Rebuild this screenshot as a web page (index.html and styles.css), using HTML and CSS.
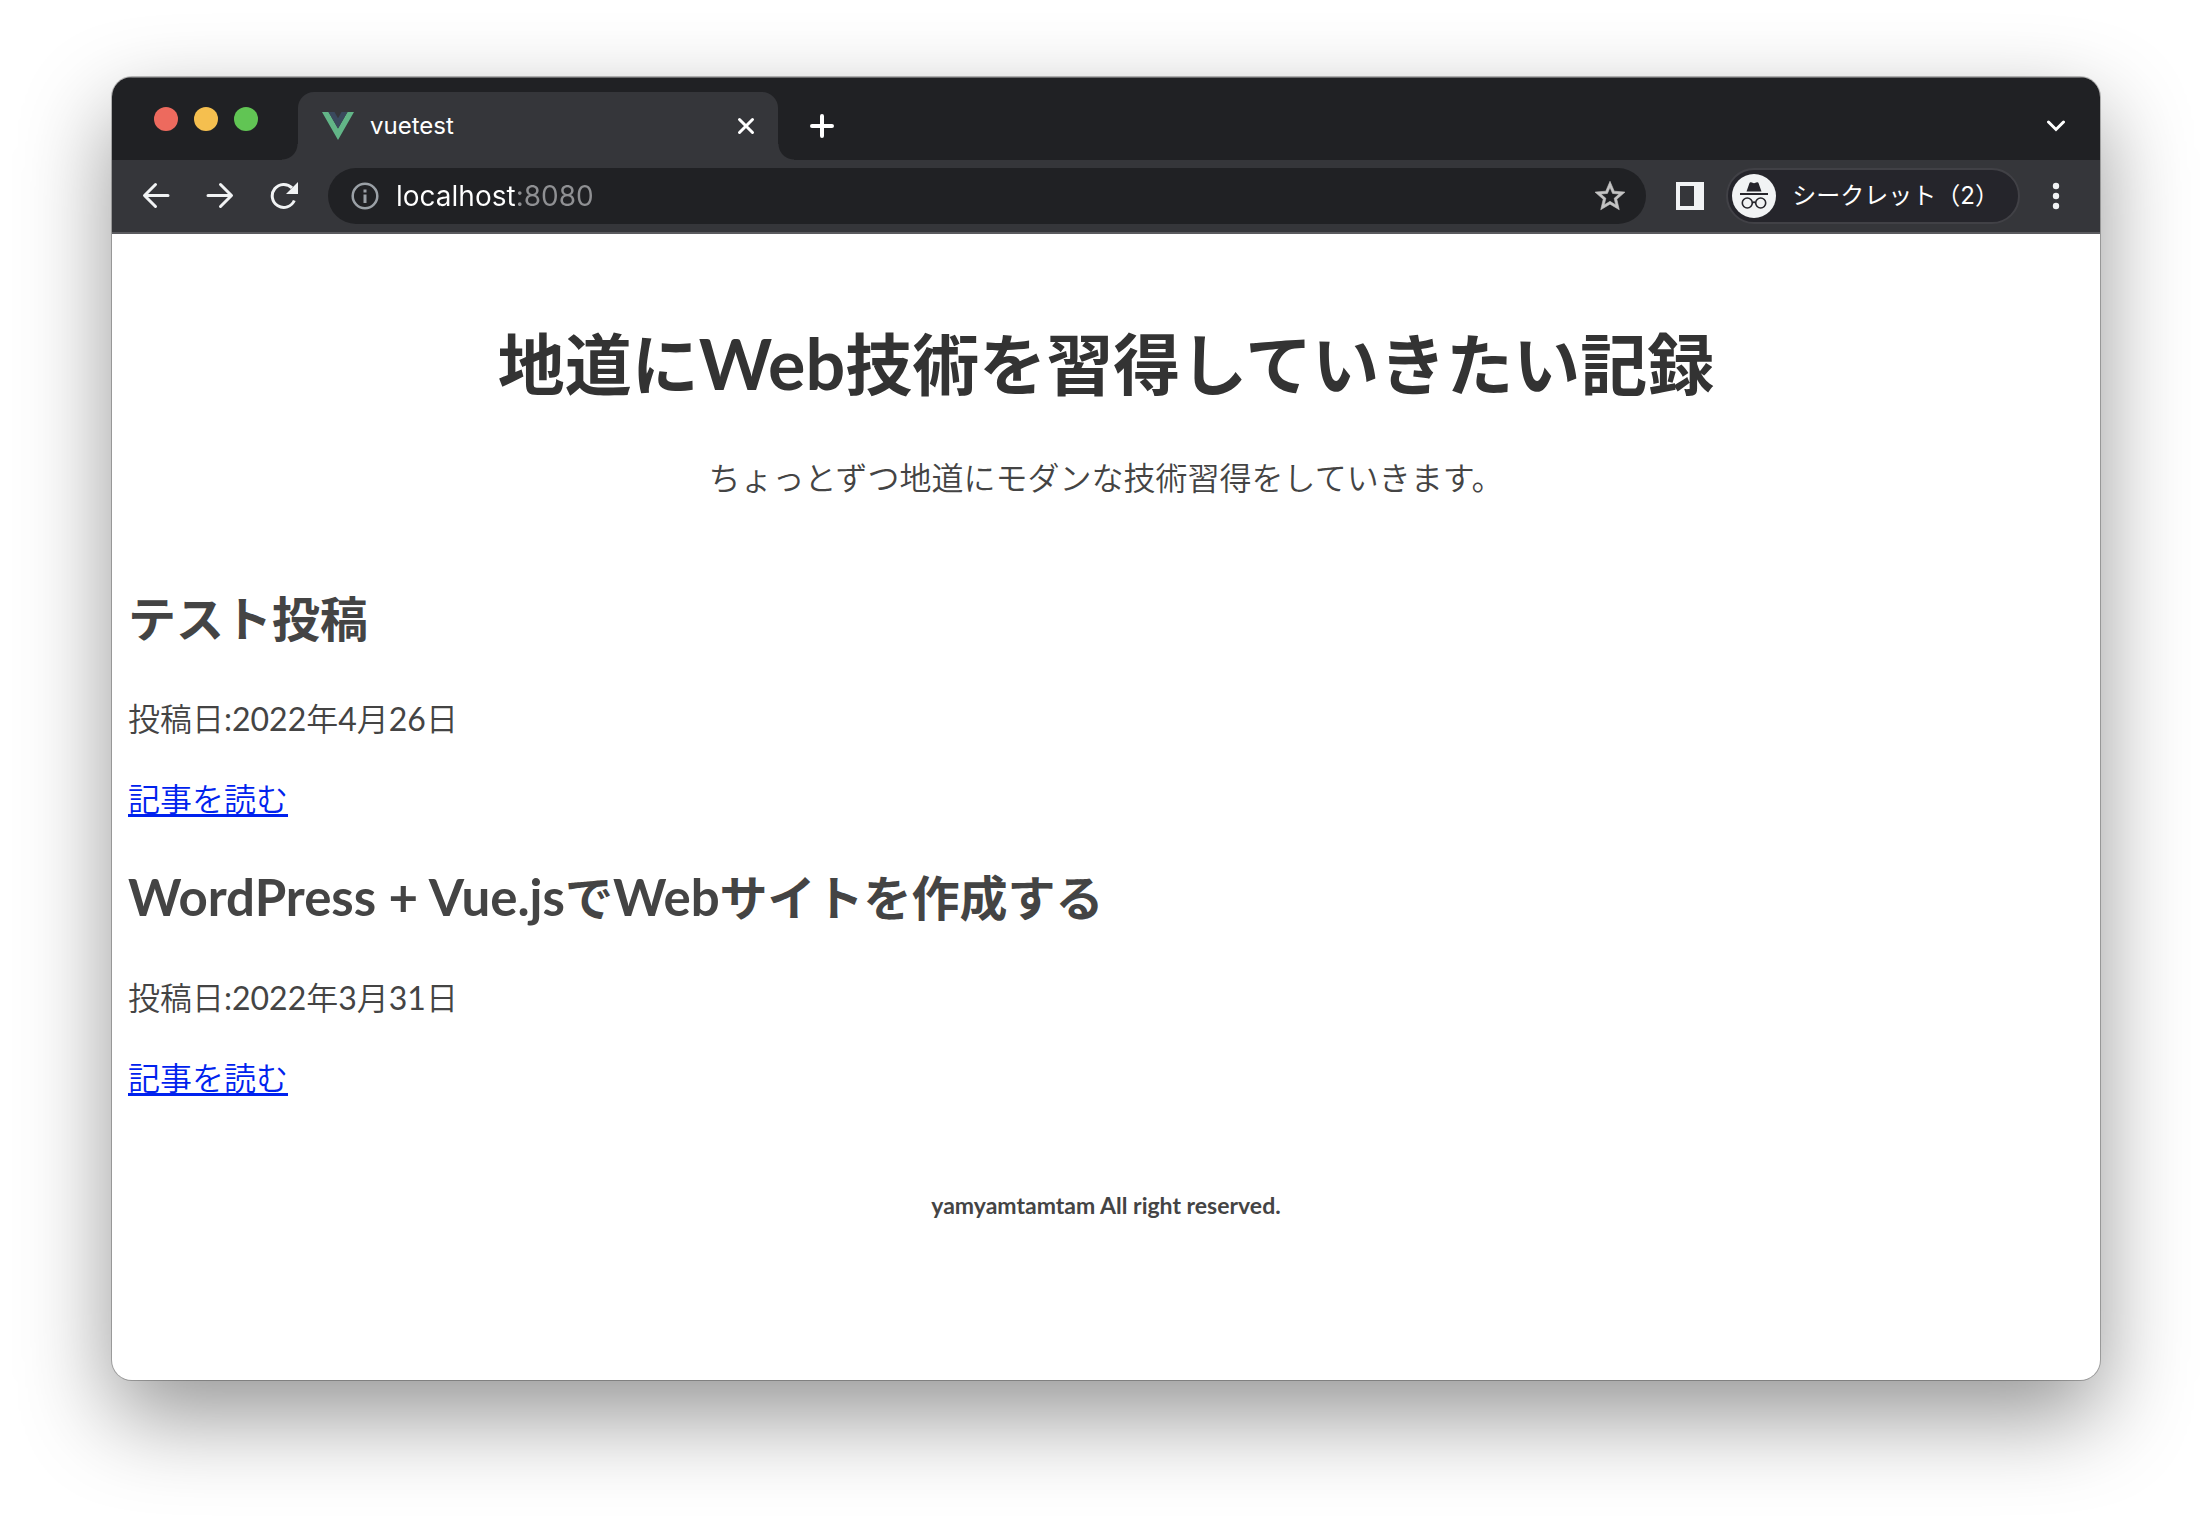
FILE: index.html
```html
<!DOCTYPE html>
<html lang="ja">
<head>
<meta charset="utf-8">
<meta name="viewport" content="width=device-width, initial-scale=1">
<title>vuetest</title>
<link rel="stylesheet" href="styles.css">
</head>
<body>
<div class="window">
  <div class="tabstrip">
    <div class="lights">
      <button class="light light-close" aria-label="閉じる"></button>
      <button class="light light-min" aria-label="しまう"></button>
      <button class="light light-max" aria-label="拡大"></button>
    </div>
    <div class="tab">
      <svg class="favicon" width="32" height="28" viewBox="0 0 32 28"><path fill="#62b587" d="M0 0h6.500L16 16.500 25.500 0H32L16 28z"/><path fill="#3a495d" d="M6.500 0h6L16 6.200 19.500 0h6L16 16.500z"/></svg>
      <span class="tab-title">vuetest</span>
      <button class="tab-close" aria-label="タブを閉じる"><svg width="20" height="20" viewBox="0 0 20 20"><path d="M3.500 3.500l13 13M16.500 3.500l-13 13" stroke="#fff" stroke-width="3" stroke-linecap="round"/></svg></button>
    </div>
    <button class="strip-button new-tab" aria-label="新しいタブ"><svg width="24" height="24" viewBox="0 0 24 24"><path d="M12 2v20M2 12h20" stroke="#fff" stroke-width="4" stroke-linecap="round"/></svg></button>
    <button class="strip-button tab-search" aria-label="タブを検索"><svg width="20" height="12" viewBox="0 0 20 12"><path d="M2.500 2l7.500 7.500L17.500 2" fill="none" stroke="#fff" stroke-width="3" stroke-linecap="round"/></svg></button>
  </div>
  <div class="toolbar">
    <button class="tool" aria-label="戻る"><svg width="28" height="28" viewBox="0 0 28 28"><path d="M13.500 2.500L2.500 13.500l11 11M3 13.500h23" fill="none" stroke="#f1f3f4" stroke-width="3" stroke-linecap="round" stroke-linejoin="round"/></svg></button>
    <button class="tool" aria-label="進む"><svg width="28" height="28" viewBox="0 0 28 28"><path d="M14.500 2.500l11 11-11 11M25 13.500H2" fill="none" stroke="#f1f3f4" stroke-width="3" stroke-linecap="round" stroke-linejoin="round"/></svg></button>
    <button class="tool" aria-label="再読み込み"><svg width="28" height="28" viewBox="0 0 28 28"><path d="M24.300 18.500A11.500 11.500 0 1 1 22 5.900" fill="none" stroke="#f1f3f4" stroke-width="3"/><path d="M28 0v12H16z" fill="#f1f3f4"/></svg></button>
    <div class="omnibox">
      <svg width="28" height="28" viewBox="0 0 28 28"><circle cx="14" cy="14" r="12.300" fill="none" stroke="#9aa0a6" stroke-width="2.500"/><path d="M12.500 12.500h3V21h-3zM12.500 7.500h3v3h-3z" fill="#9aa0a6"/></svg>
      <input class="url" type="text" value="localhost:8080" aria-label="アドレス">
      <button class="star" aria-label="ブックマーク"><svg width="30" height="30" viewBox="0 0 24 24"><path fill="#c4c4c4" stroke="#c4c4c4" stroke-width=".4" d="M22 9.240l-7.190-.620L12 2 9.190 8.630 2 9.240l5.460 4.730L5.820 21 12 17.270 18.180 21l-1.630-7.030L22 9.240zM12 15.400l-3.760 2.270 1-4.280-3.320-2.880 4.380-.380L12 6.100l1.710 4.040 4.380.380-3.320 2.880 1 4.280L12 15.400z" transform="translate(-2.400 -2.200) scale(1.200)"/></svg></button>
    </div>
    <button class="tool" aria-label="サイドパネル"><svg width="28" height="28" viewBox="0 0 28 28"><path fill="#f1f3f4" fill-rule="evenodd" d="M0 0h28v28H0zM4 4v20h14V4z"/></svg></button>
    <button class="chip">
      <svg width="44" height="44" viewBox="0 0 44 44"><circle cx="22" cy="22" r="22" fill="#f1f3f4"/><path fill="#25252b" d="M14.500 17.500L17.500 9q.4-1 1.500-.7l3 .9 3-.9q1.100-.3 1.500.7l3 8.500zM8 19h28v2H8z"/><g fill="none" stroke="#25252b" stroke-width="1.600"><circle cx="15.300" cy="29" r="5"/><circle cx="28.700" cy="29" r="5"/><path d="M20.300 29q1.700-1.600 3.400 0"/></g></svg>
      <span>シークレット（2）</span>
    </button>
    <button class="tool" aria-label="メニュー"><svg width="8" height="28" viewBox="0 0 8 28"><g fill="#f1f3f4"><circle cx="4" cy="4" r="3.200"/><circle cx="4" cy="14" r="3.200"/><circle cx="4" cy="24" r="3.200"/></g></svg></button>
  </div>
  <div class="page">
    <header class="site-header">
      <h1>地道に<span class="latin">Web</span>技術を習得していきたい記録</h1>
      <p>ちょっとずつ地道にモダンな技術習得をしていきます。</p>
    </header>
    <main class="posts">
      <article class="post">
        <h2>テスト投稿</h2>
        <p>投稿日:2022年4月26日</p>
        <a href="#post-2">記事を読む</a>
      </article>
      <article class="post">
        <h2><span class="latin">WordPress + Vue.js</span>で<span class="latin">Web</span>サイトを作成する</h2>
        <p>投稿日:2022年3月31日</p>
        <a href="#post-1">記事を読む</a>
      </article>
    </main>
    <footer class="site-footer">yamyamtamtam All right reserved.</footer>
  </div>
</div>
</body>
</html>
```
FILE: styles.css
```css
* {
  box-sizing: border-box;
}

body {
  margin: 0;
  min-height: 100vh;
  padding: 77px 112px 148px;
  display: flex;
  background: #fff;
  color: #444;
  font-family: Lato, "Noto Sans CJK JP", sans-serif;
  font-size: 32px;
  line-height: 48px;
}

h1, h2, p {
  margin: 0;
}

button {
  padding: 0;
  border: 0;
  background: none;
  display: flex;
  align-items: center;
  justify-content: center;
}

svg {
  display: block;
  flex: none;
}

.window {
  flex: 1;
  min-width: 0;
  display: flex;
  flex-direction: column;
  border-radius: 20px;
  overflow: hidden;
  background: #fff;
  box-shadow: 0 0 0 1px rgba(0, 0, 0, 0.25), 0 36px 90px rgba(0, 0, 0, 0.42);
}

/* tab strip */
.tabstrip {
  height: 83px;
  display: flex;
  align-items: flex-end;
  padding: 0 16px 0 42px;
  background: #202124;
  border-top: 1px solid #6a6a6c;
}

.lights {
  display: flex;
  align-items: center;
  align-self: stretch;
  gap: 16px;
  margin-right: 40px;
}

.light {
  width: 24px;
  height: 24px;
  border-radius: 50%;
}

.light-close { background: #ed6a5e; }
.light-min { background: #f5bf4f; }
.light-max { background: #61c554; }

.tab {
  position: relative;
  width: 480px;
  height: 68px;
  display: flex;
  align-items: center;
  gap: 16px;
  padding: 0 20px 0 24px;
  border-radius: 16px 16px 0 0;
  background: #35363a;
}

/* outward curves at the foot of the active tab */
.tab::before,
.tab::after {
  content: "";
  position: absolute;
  bottom: 0;
  width: 16px;
  height: 16px;
}

.tab::before {
  right: 100%;
  background: radial-gradient(circle at 0 0, transparent 15px, #35363a 16px);
}

.tab::after {
  left: 100%;
  background: radial-gradient(circle at 100% 0, transparent 15px, #35363a 16px);
}

.tab-title {
  flex: 1;
  color: #fff;
  font: 400 24px/32px Inter, sans-serif;
}

.tab-close {
  width: 24px;
  height: 24px;
}

.strip-button {
  width: 56px;
  height: 68px;
}

.new-tab {
  margin-left: 16px;
}

.tab-search {
  margin-left: auto;
}

/* toolbar */
.toolbar {
  height: 74px;
  display: flex;
  align-items: center;
  padding: 0 12px;
  background: #35363a;
  border-bottom: 2px solid #5b5b5f;
}

.tool {
  width: 64px;
  height: 56px;
}

.omnibox {
  flex: 1;
  min-width: 0;
  height: 56px;
  display: flex;
  align-items: center;
  gap: 17px;
  margin: 0 12px;
  padding: 0 20px 0 23px;
  border-radius: 28px;
  background: #202124;
}

.url {
  flex: 1;
  min-width: 0;
  height: 40px;
  padding: 0;
  border: 0;
  outline: 0;
  font: 400 28px/40px Inter, sans-serif;
  color: #fff;
  /* the host is bright, the port after it is dimmed */
  background: linear-gradient(90deg, #fff 122px, #8f9093 122px);
  -webkit-background-clip: text;
  background-clip: text;
  -webkit-text-fill-color: transparent;
}

.star {
  width: 32px;
  height: 32px;
}

.chip {
  height: 56px;
  gap: 16px;
  margin: 0 4px;
  padding: 0 19px 0 4px;
  border: 2px solid #414146;
  border-radius: 28px;
  background: #25252b;
  color: #fff;
  font: 400 24px/32px Inter, "Noto Sans CJK JP", sans-serif;
  white-space: nowrap;
}

/* page */
.page {
  flex: 1;
  padding: 80px 16px;
}

.site-header {
  display: flex;
  flex-direction: column;
  gap: 40px;
  text-align: center;
}

h1 {
  color: #333;
  font-size: 67px;
  line-height: 100px;
}

h1 .latin {
  font-size: 70px;
}

h2 .latin {
  font-size: 51px;
}

.latin {
  line-height: 1;
}

.posts {
  display: flex;
  flex-direction: column;
  gap: 39px;
  margin: 81px 0 87px;
}

.post {
  display: flex;
  flex-direction: column;
  align-items: flex-start;
}

h2 {
  margin-bottom: 40px;
  font-size: 48px;
  line-height: 72px;
}

.post p {
  margin-bottom: 32px;
}

.site-header p,
.post p,
.post a {
  font-family: Lato, "Noto Sans CJK JP DemiLight", "Noto Sans CJK JP", sans-serif;
  font-weight: 400;
}

.post a {
  color: #0022ee;
  text-decoration-thickness: 3px;
  text-underline-offset: 3px;
}

.site-footer {
  text-align: center;
  font-size: 23px;
  font-weight: 700;
  line-height: 32px;
}
```
